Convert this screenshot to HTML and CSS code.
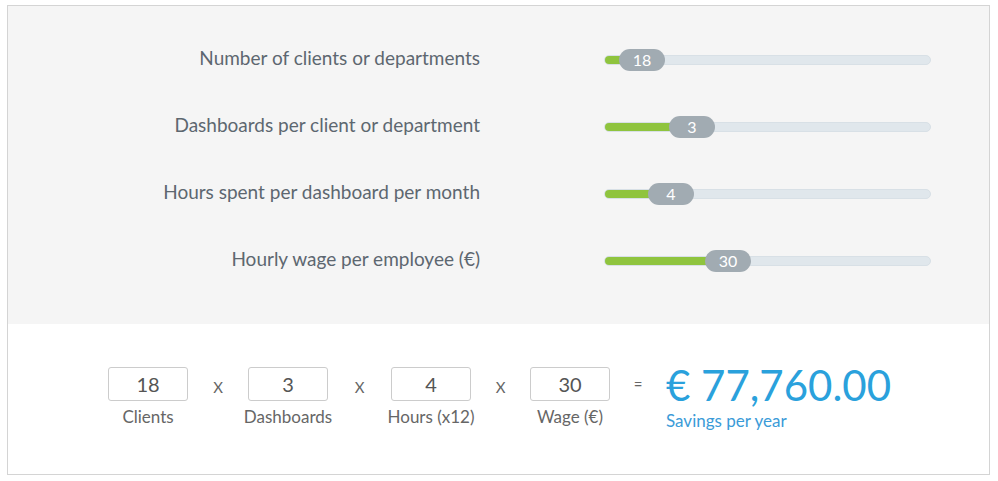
FILE: index.html
```html
<!DOCTYPE html>
<html>
<head>
<meta charset="utf-8">
<link rel="stylesheet" href="styles.css">
</head>
<body>
<div class="calc">
  <div class="sliders">
    <div class="row">
      <div class="label">Number of clients or departments</div>
      <div class="track">
        <div class="fill" style="width:37px"></div>
        <div class="handle" style="left:14px">18</div>
      </div>
    </div>
    <div class="row">
      <div class="label">Dashboards per client or department</div>
      <div class="track">
        <div class="fill" style="width:87px"></div>
        <div class="handle" style="left:64px">3</div>
      </div>
    </div>
    <div class="row">
      <div class="label">Hours spent per dashboard per month</div>
      <div class="track">
        <div class="fill" style="width:66px"></div>
        <div class="handle" style="left:43px">4</div>
      </div>
    </div>
    <div class="row">
      <div class="label">Hourly wage per employee (€)</div>
      <div class="track">
        <div class="fill" style="width:123px"></div>
        <div class="handle" style="left:100px">30</div>
      </div>
    </div>
  </div>
  <div class="result">
    <div class="group"><div class="box">18</div><div class="cap">Clients</div></div>
    <div class="op">X</div>
    <div class="group"><div class="box">3</div><div class="cap">Dashboards</div></div>
    <div class="op op-wide">X</div>
    <div class="group"><div class="box">4</div><div class="cap">Hours (x12)</div></div>
    <div class="op op-narrow">X</div>
    <div class="group"><div class="box">30</div><div class="cap">Wage (€)</div></div>
    <div class="op eq">=</div>
    <div class="total">
      <div class="amount">€ 77,760.00</div>
      <div class="sub">Savings per year</div>
    </div>
  </div>
</div>
</body>
</html>
```
FILE: styles.css
```css
html, body { margin: 0; padding: 0; background: #fff; }
body { font-family: Lato, "Open Sans", sans-serif; }
.calc {
  margin: 5px 0 0 7px;
  width: 981px;
  height: 468px;
  border: 1px solid #d4d4d4;
  display: flex;
  flex-direction: column;
}
.sliders {
  background: #f5f5f5;
  height: 318px;
  padding-top: 20px;
  box-sizing: border-box;
}
.row {
  height: 67px;
  display: flex;
  align-items: center;
}
.label {
  width: 472px;
  text-align: right;
  font-size: 19px;
  line-height: 22px;
  margin-top: -3px;
  color: #5d6770;
}
.track {
  position: relative;
  margin-left: 124px;
  width: 327px;
  height: 10px;
  box-sizing: border-box;
  background: #e0e7ec;
  border: 1px solid #d8e0e6;
  border-radius: 5px;
}
.fill {
  height: 8px;
  background: #8fc43e;
  border-radius: 4px;
}
.handle {
  position: absolute;
  top: -7px;
  width: 46px;
  height: 22px;
  border-radius: 11px;
  background: #a1abb2;
  color: #fff;
  font-size: 16px;
  line-height: 22px;
  text-align: center;
}
.result {
  flex: 1;
  display: flex;
  align-items: flex-start;
  padding: 43px 0 0 100px;
}
.group {
  width: 80px;
  display: flex;
  flex-direction: column;
  align-items: center;
}
.box {
  width: 80px;
  height: 34px;
  box-sizing: border-box;
  border: 1px solid #cccccc;
  border-radius: 3px;
  font-size: 20px;
  line-height: 32px;
  text-align: center;
  color: #555;
}
.cap {
  white-space: nowrap;
  margin-top: 5px;
  font-size: 17px;
  color: #666;
}
.op {
  width: 60px;
  text-align: center;
  font-size: 15px;
  color: #666;
  line-height: 34px;
  padding-top: 3px;
}
.op-wide { width: 63px; }
.op-narrow { width: 59px; }
.eq { width: 56px; padding-top: 0; }
.total { color: #2aa1dc; }
.amount {
  font-size: 42px;
  line-height: 44px;
  margin-top: -4px;
}
.sub {
  font-size: 17px;
  line-height: 20px;
  color: #3b9bd8;
  padding-top: 4px;
}
```
